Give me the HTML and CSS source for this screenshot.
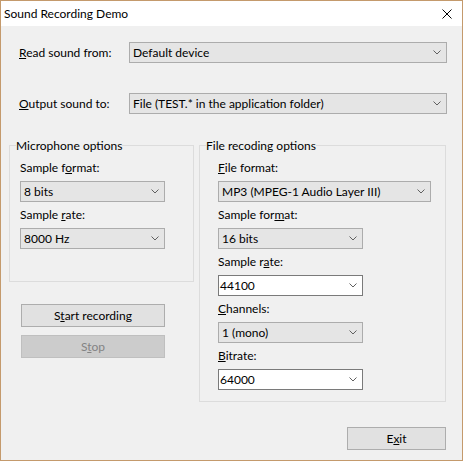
FILE: index.html
```html
<!DOCTYPE html>
<html>
<head>
<meta charset="utf-8">
<link rel="stylesheet" href="styles.css">
</head>
<body>
<div class="window">
  <div class="titlebar">
    <span class="title">Sound Recording Demo</span>
    <svg class="close" width="10" height="10" viewBox="0 0 10 10"><path d="M0.5 0.5L9.5 9.5M9.5 0.5L0.5 9.5" stroke="#000" stroke-width="1" fill="none"/></svg>
  </div>
  <div class="client">
    <div class="row">
      <span class="row-label"><u>R</u>ead sound from:</span>
      <div class="combo combo-wide"><span>Default device</span><svg class="chev" width="8" height="5" viewBox="0 0 8 5"><path d="M0.5 0.5L4 4L7.5 0.5" stroke="#606060" fill="none"/></svg></div>
    </div>
    <div class="row row-next">
      <span class="row-label"><u>O</u>utput sound to:</span>
      <div class="combo combo-wide"><span>File (TEST.* in the application folder)</span><svg class="chev" width="8" height="5" viewBox="0 0 8 5"><path d="M0.5 0.5L4 4L7.5 0.5" stroke="#606060" fill="none"/></svg></div>
    </div>
    <div class="panels">
      <div class="left-col">
        <div class="group group-mic">
          <span class="group-title">Microphone options</span>
          <div class="field">
            <div class="field-label">Sample f<u>o</u>rmat:</div>
            <div class="combo combo-small"><span>8 bits</span><svg class="chev" width="8" height="5" viewBox="0 0 8 5"><path d="M0.5 0.5L4 4L7.5 0.5" stroke="#606060" fill="none"/></svg></div>
          </div>
          <div class="field">
            <div class="field-label">Sample <u>r</u>ate:</div>
            <div class="combo combo-small"><span>8000 Hz</span><svg class="chev" width="8" height="5" viewBox="0 0 8 5"><path d="M0.5 0.5L4 4L7.5 0.5" stroke="#606060" fill="none"/></svg></div>
          </div>
        </div>
        <div class="buttons">
          <button class="btn btn-main">S<u>t</u>art recording</button>
          <button class="btn btn-main btn-disabled">S<u>t</u>op</button>
        </div>
      </div>
      <div class="group group-file">
        <span class="group-title">File recoding options</span>
        <div class="field">
          <div class="field-label"><u>F</u>ile format:</div>
          <div class="combo combo-medium"><span>MP3 (MPEG-1 Audio Layer III)</span><svg class="chev" width="8" height="5" viewBox="0 0 8 5"><path d="M0.5 0.5L4 4L7.5 0.5" stroke="#606060" fill="none"/></svg></div>
        </div>
        <div class="field">
          <div class="field-label">Sample for<u>m</u>at:</div>
          <div class="combo combo-small"><span>16 bits</span><svg class="chev" width="8" height="5" viewBox="0 0 8 5"><path d="M0.5 0.5L4 4L7.5 0.5" stroke="#606060" fill="none"/></svg></div>
        </div>
        <div class="field">
          <div class="field-label">Sample r<u>a</u>te:</div>
          <div class="combo combo-small combo-edit"><span>44100</span><svg class="chev" width="8" height="5" viewBox="0 0 8 5"><path d="M0.5 0.5L4 4L7.5 0.5" stroke="#606060" fill="none"/></svg></div>
        </div>
        <div class="field">
          <div class="field-label"><u>C</u>hannels:</div>
          <div class="combo combo-small"><span>1 (mono)</span><svg class="chev" width="8" height="5" viewBox="0 0 8 5"><path d="M0.5 0.5L4 4L7.5 0.5" stroke="#606060" fill="none"/></svg></div>
        </div>
        <div class="field">
          <div class="field-label"><u>B</u>itrate:</div>
          <div class="combo combo-small combo-edit"><span>64000</span><svg class="chev" width="8" height="5" viewBox="0 0 8 5"><path d="M0.5 0.5L4 4L7.5 0.5" stroke="#606060" fill="none"/></svg></div>
        </div>
      </div>
    </div>
    <div class="footer">
      <button class="btn btn-exit">E<u>x</u>it</button>
    </div>
  </div>
</div>
</body>
</html>
```

FILE: styles.css
```css
html, body {
  margin: 0;
  padding: 0;
}

body {
  width: 463px;
  height: 461px;
  font-family: Lato, "Noto Sans", sans-serif;
  font-size: 12px;
  color: #000;
}

.window {
  width: 463px;
  height: 461px;
  box-sizing: border-box;
  border: 1px solid #c49a6c;
  background: #f0f0f0;
  display: flex;
  flex-direction: column;
}

.titlebar {
  height: 25px;
  flex: none;
  background: #fff;
  display: flex;
  align-items: center;
  justify-content: space-between;
  padding: 0 10px 0 3px;
}

.title {
  font-size: 12px;
  line-height: 15px;
}

.close {
  display: block;
}

.client {
  flex: 1;
  padding: 16px 15px 0 8px;
  display: flex;
  flex-direction: column;
}

.row {
  display: flex;
  align-items: center;
  height: 21px;
  margin-left: 10px;
}

.row-next {
  margin-top: 30px;
}

.row-label {
  width: 110px;
  line-height: 15px;
}

.combo {
  display: flex;
  align-items: center;
  justify-content: space-between;
  box-sizing: border-box;
  height: 21px;
  border: 1px solid #acacac;
  background: #e5e5e5;
  padding: 0 5px 0 3px;
  line-height: 15px;
  white-space: nowrap;
}

.combo-edit {
  background: #fff;
  border-color: #7a7a7a;
  padding-left: 1px;
}

.combo-wide {
  width: 318px;
}

.combo-medium {
  width: 213px;
}

.combo-small {
  width: 145px;
}

.chev {
  display: block;
  flex: none;
}

.panels {
  display: flex;
  align-items: flex-start;
  gap: 5px;
  margin-top: 31px;
}

.left-col {
  width: 185px;
}

.group {
  position: relative;
  box-sizing: border-box;
  border: 1px solid #dcdcdc;
}

.group-title {
  position: absolute;
  top: -8px;
  left: 6px;
  line-height: 15px;
  background: #f0f0f0;
  white-space: nowrap;
}

.group-mic {
  width: 185px;
  padding: 14px 10px 32px 10px;
}

.group-file {
  width: 247px;
  padding: 14px 10px 11px 18px;
}

.field + .field {
  margin-top: 5px;
}

.field-label {
  height: 15px;
  line-height: 15px;
  margin-bottom: 6px;
}

.buttons {
  display: flex;
  flex-direction: column;
  gap: 8px;
  margin: 22px 0 0 12px;
}

.btn {
  box-sizing: border-box;
  height: 23px;
  border: 1px solid #adadad;
  background: #e1e1e1;
  color: #000;
  font-family: inherit;
  font-size: 12px;
  padding: 0;
  margin: 0;
  line-height: 15px;
}

.btn-main {
  width: 144px;
}

.btn-disabled {
  background: #cccccc;
  border-color: #bfbfbf;
  color: #838383;
}

.footer {
  display: flex;
  justify-content: flex-end;
  margin-top: 25px;
}

.btn-exit {
  width: 99px;
  margin-right: 1px;
}
```
